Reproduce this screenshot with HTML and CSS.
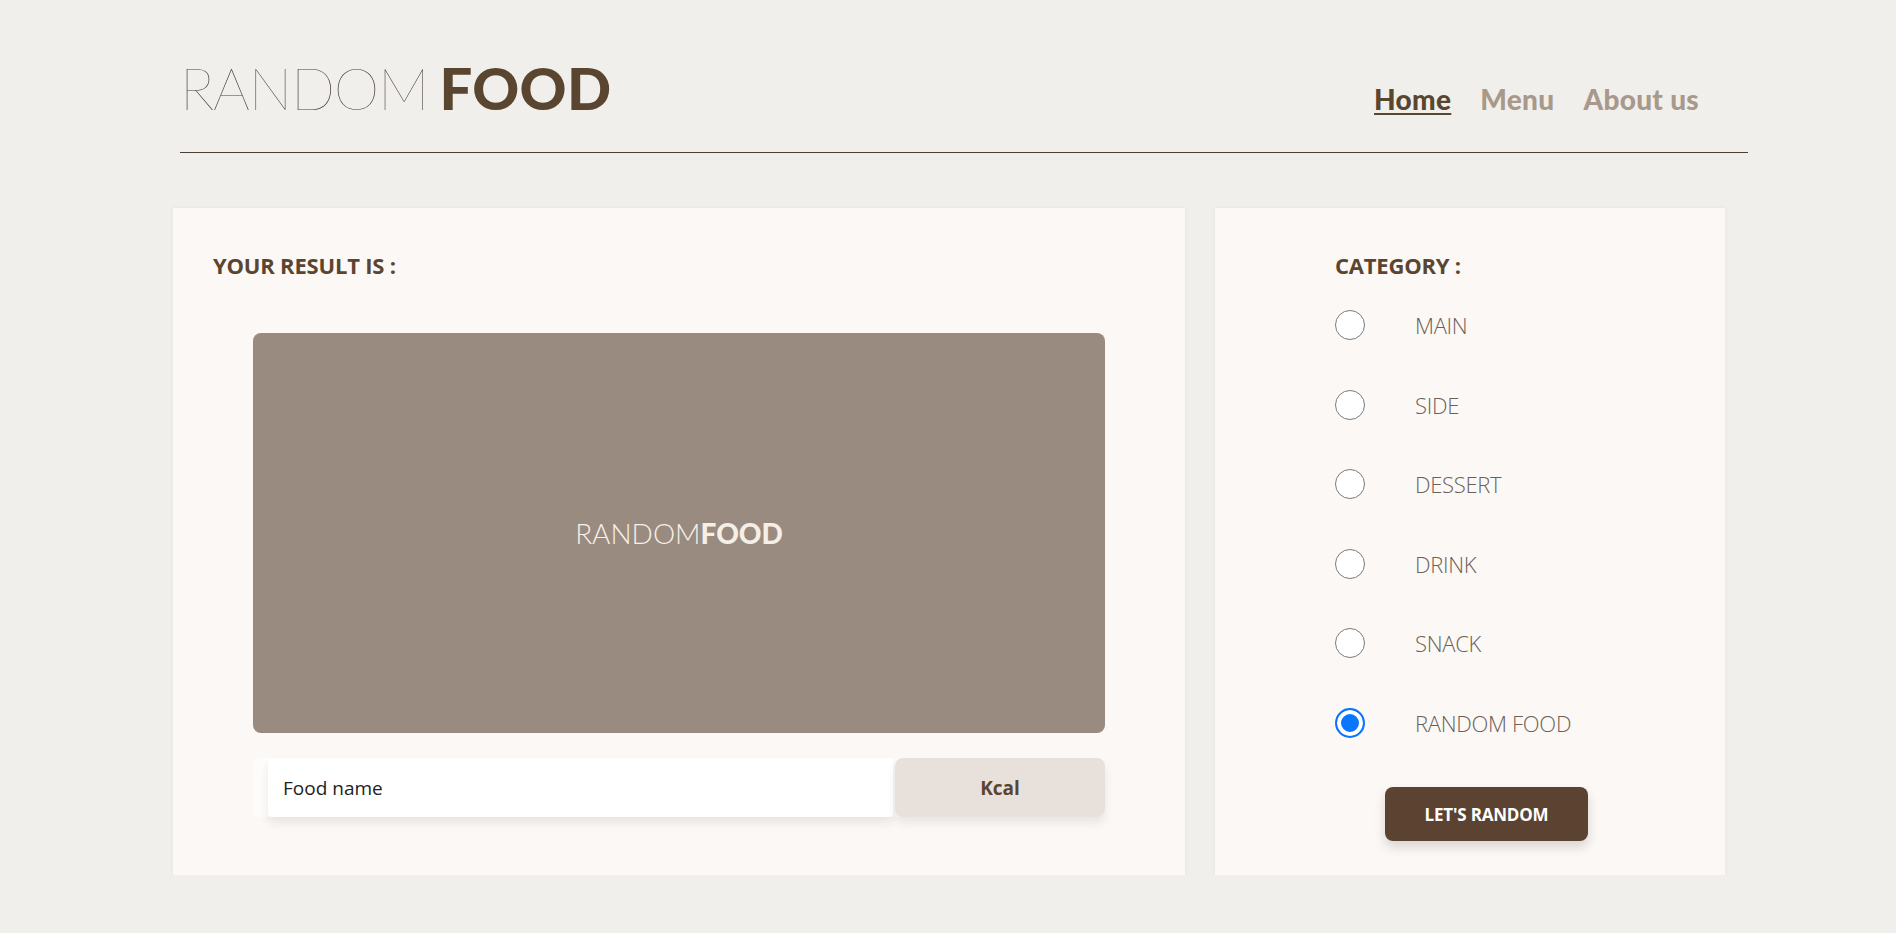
FILE: index.html
```html
<!DOCTYPE html>
<html lang="en">
<head>
<meta charset="utf-8">
<title>Random Food</title>
<link rel="stylesheet" href="styles.css">
</head>
<body>
<header class="header">
  <div class="brand"><span class="brand-thin">RANDOM</span> <span class="brand-bold">FOOD</span></div>
  <nav class="nav">
    <a class="nav-link active" href="#">Home</a>
    <a class="nav-link" href="#">Menu</a>
    <a class="nav-link" href="#">About us</a>
  </nav>
</header>
<main class="main">
  <section class="card result-card">
    <h2 class="card-title">YOUR RESULT IS :</h2>
    <div class="result-body">
      <div class="preview"><span class="preview-thin">RANDOM</span><span class="preview-bold">FOOD</span></div>
      <div class="info-row">
        <div class="food-name">Food name</div>
        <div class="kcal">Kcal</div>
      </div>
    </div>
  </section>
  <section class="card category-card">
    <form class="category-form">
      <h2 class="card-title">CATEGORY :</h2>
      <label class="option"><span class="radio"></span><span class="option-label">MAIN</span></label>
      <label class="option"><span class="radio"></span><span class="option-label">SIDE</span></label>
      <label class="option"><span class="radio"></span><span class="option-label">DESSERT</span></label>
      <label class="option"><span class="radio"></span><span class="option-label">DRINK</span></label>
      <label class="option"><span class="radio"></span><span class="option-label">SNACK</span></label>
      <label class="option"><span class="radio checked"></span><span class="option-label">RANDOM FOOD</span></label>
      <button type="button" class="random-btn">LET'S RANDOM</button>
    </form>
  </section>
</main>
</body>
</html>
```

FILE: styles.css
```css
* { box-sizing: border-box; }
body {
  margin: 0;
  background: #f1efeb;
  font-family: "Open Sans", "Noto Sans", sans-serif;
  color: #5a4530;
}
.header {
  margin-left: 180px;
  width: 1568px;
  height: 153px;
  border-bottom: 1px solid #4a3d33;
  display: flex;
  justify-content: space-between;
  align-items: flex-start;
}
.brand {
  margin-top: 59px;
  font-family: "Lato", sans-serif;
  font-size: 58px;
  line-height: 1;
  color: #5a4530;
  white-space: nowrap;
  word-spacing: -4px;
}
.brand-thin { font-weight: 100; color: #4e4036; letter-spacing: -1.2px; }
.brand-bold { font-weight: 900; letter-spacing: 0.3px; }
.nav {
  margin-top: 85px;
  margin-right: 49px;
  display: flex;
  gap: 29px;
}
.nav-link {
  font-family: "Lato", sans-serif;
  font-weight: 900;
  font-size: 28px;
  line-height: 1;
  color: #a8998a;
  text-decoration: none;
  letter-spacing: 0.3px;
}
.nav-link.active {
  color: #5a4530;
  text-decoration: underline;
  text-underline-offset: 3px;
  text-decoration-thickness: 2px;
}
.main {
  margin-left: 173px;
  margin-top: 55px;
  display: flex;
  gap: 30px;
}
.card {
  background: #fbf8f5;
  box-shadow: 0 0 4px rgba(0,0,0,0.05);
  height: 667px;
}
.result-card {
  width: 1012px;
  padding: 44px 40px 0;
}
.card-title {
  margin: 0;
  font-size: 22px;
  font-weight: 700;
  line-height: 1.2;
  letter-spacing: -0.2px;
  color: #5a4530;
}
.result-body {
  padding: 0 40px;
  margin-top: 55px;
}
.preview {
  height: 400px;
  background: #998b7f;
  border-radius: 8px;
  display: flex;
  align-items: center;
  justify-content: center;
  font-family: "Lato", sans-serif;
  font-size: 28px;
  color: #f6efe7;
}
.preview-thin { font-weight: 300; }
.preview-bold { font-weight: 900; }
.info-row {
  margin-top: 25px;
  height: 59px;
  display: flex;
  gap: 2px;
  background: #fdfcfb;
  border-radius: 6px;
}
.food-name {
  flex: 1;
  margin-left: 15px;
  background: #fff;
  border-radius: 4px;
  box-shadow: 0 6px 10px rgba(0,0,0,0.08);
  padding-left: 15px;
  display: flex;
  align-items: center;
  font-size: 19px;
  color: #222;
}
.kcal {
  width: 210px;
  background: #e8e1db;
  border-radius: 8px;
  box-shadow: 0 6px 10px rgba(0,0,0,0.08);
  display: flex;
  align-items: center;
  justify-content: center;
  font-size: 19px;
  font-weight: 700;
  color: #5a4530;
}
.category-card {
  width: 510px;
  padding: 44px 0 0 120px;
}
.category-form {
  display: flex;
  flex-direction: column;
  align-items: flex-start;
}
.option {
  display: flex;
  align-items: center;
  height: 79.5px;
}
.category-form .card-title { margin-bottom: 7px; }
.radio {
  width: 30px;
  height: 30px;
  border: 1.5px solid #7a7a7a;
  border-radius: 50%;
  background: #fff;
}
.radio.checked {
  border: 2px solid #0a75ff;
  background: #0a75ff;
  box-shadow: inset 0 0 0 4px #fff;
}
.option-label {
  margin-left: 50px;
  font-size: 22px;
  font-weight: 300;
  color: #6b5f58;
  letter-spacing: -0.3px;
}
.random-btn {
  margin-top: 25px;
  margin-left: 50px;
  width: 203px;
  height: 54px;
  border: none;
  border-radius: 8px;
  background: #5c4331;
  color: #fff;
  font-family: "Open Sans", sans-serif;
  font-size: 17px;
  font-weight: 700;
  letter-spacing: -0.2px;
  box-shadow: 0 6px 12px rgba(0,0,0,0.15);
}
```
